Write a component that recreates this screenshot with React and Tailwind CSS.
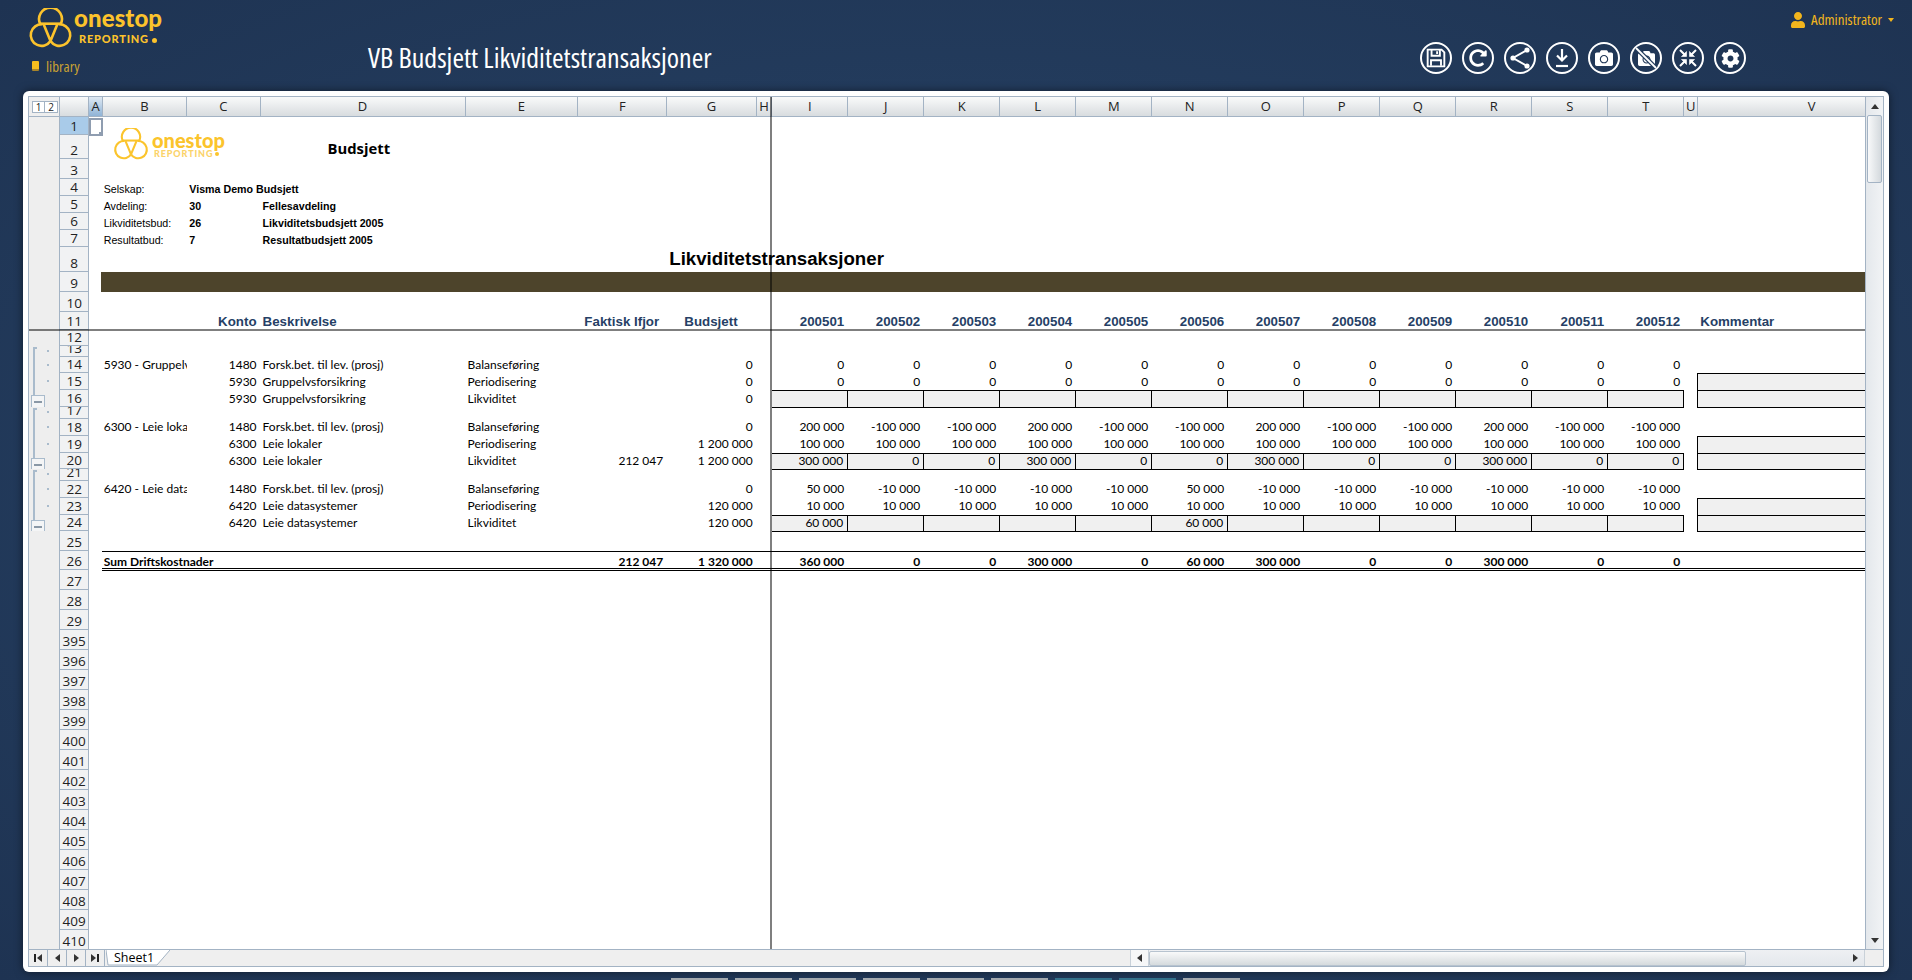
import React from "react";
import { FaCamera, FaCog, FaRedoAlt, FaUser } from "react-icons/fa";

const COLS = [
  ["A", 13.4], ["B", 84.6], ["C", 73.3], ["D", 205], ["E", 112.7], ["F", 89], ["G", 89.4], ["H", 15.6],
  ["I", 76], ["J", 76], ["K", 76], ["L", 76], ["M", 76], ["N", 76], ["O", 76], ["P", 76], ["Q", 76], ["R", 76], ["S", 76], ["T", 76],
  ["U", 14], ["V", 228],
];
const W = Object.fromEntries(COLS);
const MONTHS = ["I", "J", "K", "L", "M", "N", "O", "P", "Q", "R", "S", "T"];
const PERIODS = ["200501", "200502", "200503", "200504", "200505", "200506", "200507", "200508", "200509", "200510", "200511", "200512"];

const info = (label, a, b) => ({
  B: <span className="font-['Liberation_Sans',sans-serif] text-[10.67px] leading-[14px]">{label}</span>,
  C: <span className="font-['Liberation_Sans',sans-serif] text-[10.67px] font-bold leading-[14px]">{a}</span>,
  D: <span className="font-['Liberation_Sans',sans-serif] text-[10.67px] font-bold leading-[14px]">{b}</span>,
});

const ROWS = [
  { n: "1", h: 18, sel: true },
  { n: "2", h: 24, cells: { D: <span className="pl-[65px] font-['Open_Sans',sans-serif] text-[14.8px] font-bold leading-[22px]">Budsjett</span> } },
  { n: "3", h: 20 },
  { n: "4", h: 17, cells: info("Selskap:", "Visma Demo Budsjett", "") },
  { n: "5", h: 17, cells: info("Avdeling:", "30", "Fellesavdeling") },
  { n: "6", h: 17, cells: info("Likviditetsbud:", "26", "Likviditetsbudsjett 2005") },
  { n: "7", h: 17, cells: info("Resultatbud:", "7", "Resultatbudsjett 2005") },
  { n: "8", h: 25, cells: { G: <span className="pl-[2px] font-['Liberation_Sans',sans-serif] text-[18.67px] font-bold leading-[27px]">Likviditetstransaksjoner</span> } },
  { n: "9", h: 20, band: true },
  { n: "10", h: 20 },
  { n: "11", h: 18, head: true },
  { n: "12", h: 16 },
  { n: "13", h: 11, o: "top" },
  { n: "14", h: 16, o: "mid", B: "5930 - Gruppelvsforsikring", C: "1480", D: "Forsk.bet. til lev. (prosj)", E: "Balanseføring", G: "0", m: Array(12).fill("0") },
  { n: "15", h: 17, o: "mid", vbox: true, C: "5930", D: "Gruppelvsforsikring", E: "Periodisering", G: "0", m: Array(12).fill("0") },
  { n: "16", h: 17, o: "end", vbox: true, box: true, C: "5930", D: "Gruppelvsforsikring", E: "Likviditet", G: "0", m: Array(12).fill("") },
  { n: "17", h: 12, o: "top" },
  { n: "18", h: 17, o: "mid", up: true, B: "6300 - Leie lokaler", C: "1480", D: "Forsk.bet. til lev. (prosj)", E: "Balanseføring", G: "0", m: ["200 000", "-100 000", "-100 000", "200 000", "-100 000", "-100 000", "200 000", "-100 000", "-100 000", "200 000", "-100 000", "-100 000"] },
  { n: "19", h: 17, o: "mid", up: true, vbox: true, C: "6300", D: "Leie lokaler", E: "Periodisering", G: "1 200 000", m: Array(12).fill("100 000") },
  { n: "20", h: 16, o: "end", vbox: true, box: true, C: "6300", D: "Leie lokaler", E: "Likviditet", F: "212 047", G: "1 200 000", m: ["300 000", "0", "0", "300 000", "0", "0", "300 000", "0", "0", "300 000", "0", "0"] },
  { n: "21", h: 12, o: "top" },
  { n: "22", h: 17, o: "mid", up: true, B: "6420 - Leie datasystemer", C: "1480", D: "Forsk.bet. til lev. (prosj)", E: "Balanseføring", G: "0", m: ["50 000", "-10 000", "-10 000", "-10 000", "-10 000", "50 000", "-10 000", "-10 000", "-10 000", "-10 000", "-10 000", "-10 000"] },
  { n: "23", h: 17, o: "mid", up: true, vbox: true, C: "6420", D: "Leie datasystemer", E: "Periodisering", G: "120 000", m: Array(12).fill("10 000") },
  { n: "24", h: 16, o: "end", vbox: true, box: true, C: "6420", D: "Leie datasystemer", E: "Likviditet", G: "120 000", m: ["60 000", "", "", "", "", "60 000", "", "", "", "", "", ""] },
  { n: "25", h: 20 },
  { n: "26", h: 19, sum: true, B: "Sum Driftskostnader", F: "212 047", G: "1 320 000", m: ["360 000", "0", "0", "300 000", "0", "60 000", "300 000", "0", "0", "300 000", "0", "0"] },
  { n: "27", h: 20 },
  { n: "28", h: 20 },
  { n: "29", h: 20 },
  ...Array.from({ length: 16 }, (_, i) => ({ n: String(395 + i), h: 20 })),
];

function Tri({ dir, className = "" }) {
  const d = { up: "M0 5 L4 0 L8 5Z", down: "M0 0 L8 0 L4 5Z", left: "M5 0 L5 8 L0 4Z", right: "M0 0 L0 8 L5 4Z" }[dir];
  const v = dir === "up" || dir === "down";
  return (
    <svg width={v ? 8 : 5} height={v ? 5 : 8} viewBox={v ? "0 0 8 5" : "0 0 5 8"} className={className}>
      <path d={d} fill="#333" />
    </svg>
  );
}

function LogoMark({ size, color }) {
  return (
    <svg width={size} height={size * 0.9} viewBox="22 22 138 124" fill="none" stroke={color} strokeWidth="8" className="shrink-0">
      <path d="M60 72 A35 35 0 1 1 122 72" />
      <path d="M56 70 H126" />
      <path d="M66 72 A33 33 0 1 0 91 123" />
      <path d="M116 72 A33 33 0 1 1 91 123" />
      <path d="M70 72 L91 123 M112 72 L91 123" />
    </svg>
  );
}

function RoundIcon({ children }) {
  return <div className="flex h-[32px] w-[32px] items-center justify-center rounded-full border-2 border-white text-white">{children}</div>;
}

function Toolbar() {
  return (
    <div className="flex gap-[10px] pt-[42px]">
      <RoundIcon>
        <svg width="20" height="20" viewBox="0 0 18 18" fill="none" stroke="#fff" strokeWidth="1.7">
          <path d="M1.5 1.5 H14 L16.5 4 V16.5 H1.5Z" />
          <path d="M5 1.5 V7 H12.5 V1.5 M10 3 V5.5" />
          <path d="M4.5 16 V11 H13.5 V16" />
        </svg>
      </RoundIcon>
      <RoundIcon><FaRedoAlt size={18} /></RoundIcon>
      <RoundIcon>
        <svg width="20" height="22" viewBox="0 0 20 22" fill="none" stroke="#fff" strokeWidth="2">
          <path d="M17 3 L3 11 L17 19" />
          <circle cx="17" cy="3" r="1.6" fill="#fff" />
          <circle cx="3" cy="11" r="1.6" fill="#fff" />
          <circle cx="17" cy="19" r="1.6" fill="#fff" />
        </svg>
      </RoundIcon>
      <RoundIcon>
        <svg width="18" height="20" viewBox="0 0 18 20" fill="none" stroke="#fff" strokeWidth="2.2">
          <path d="M9 1 V12 M4 7.5 L9 12.5 L14 7.5" />
          <path d="M3 18 H15" />
        </svg>
      </RoundIcon>
      <RoundIcon><FaCamera size={18} /></RoundIcon>
      <div className="relative">
        <RoundIcon><FaCamera size={17} /></RoundIcon>
        <svg width="32" height="32" viewBox="0 0 32 32" className="absolute left-0 top-0">
          <path d="M6 6 L26 26" stroke="#233c5c" strokeWidth="4.5" />
          <path d="M6 6 L26 26" stroke="#fff" strokeWidth="1.8" />
        </svg>
      </div>
      <RoundIcon>
        <svg width="20" height="20" viewBox="0 0 20 20" fill="none" stroke="#fff" strokeWidth="2">
          <path d="M2 2 L7.5 7.5 M18 2 L12.5 7.5 M2 18 L7.5 12.5 M18 18 L12.5 12.5" />
          <path d="M8.5 3.5 V8.5 H3.5Z M11.5 3.5 V8.5 H16.5Z M8.5 16.5 V11.5 H3.5Z M11.5 16.5 V11.5 H16.5Z" fill="#fff" strokeWidth="0.6" />
        </svg>
      </RoundIcon>
      <RoundIcon><FaCog size={19} /></RoundIcon>
    </div>
  );
}

function Header() {
  const cond = "font-['Open_Sans',sans-serif] font-stretch-condensed";
  return (
    <header className="flex h-[91px] shrink-0">
      <div className="w-[368px] pl-[28px] pt-[7px]">
        <div className="flex">
          <div className="pt-[1px]"><LogoMark size={45} color="#fcc32c" /></div>
          <div className="ml-[1px] flex flex-col text-[#fcc32c]">
            <span className="font-['Lato',sans-serif] text-[24px] font-black leading-[22px] tracking-[0.1px]">onestop</span>
            <span className="mt-[4px] flex items-center pl-[5px] font-['Lato',sans-serif] text-[11px] font-black leading-[12px] tracking-[0.8px]">
              REPORTING
              <i className="ml-[3px] mt-[2px] block h-[5px] w-[5px] rounded-full bg-[#fcc32c]" />
            </span>
          </div>
        </div>
        <div className="mt-[8px] flex items-center gap-[7px] pl-[4px] text-[#c9a233]">
          <span className="block h-[10px] w-[7px] rounded-[1px] border-b-2 border-[#a8842a] bg-[#f5bd1f]" />
          <span className={`${cond} text-[15px] leading-[18px]`}>library</span>
        </div>
      </div>
      <div className={`${cond} w-[1052px] pt-[40px] text-[28px] leading-[34px] text-white`}>VB Budsjett Likviditetstransaksjoner</div>
      <Toolbar />
      <div className={`${cond} ml-auto flex h-[24px] items-center pr-[18px] pt-[15px] text-[15px] text-[#f2b51d]`}>
        <FaUser size={16} className="mr-[5px]" />
        Administrator
        <span className="ml-[6px] h-0 w-0 border-x-[3.5px] border-t-[4px] border-x-transparent border-t-[#f2b51d]" />
      </div>
    </header>
  );
}

function Cell({ col, className = "", children }) {
  return (
    <div className={`flex shrink-0 items-end leading-[17px] ${className}`} style={{ width: W[col] }}>
      {children}
    </div>
  );
}

const DATA = "font-['Lato',sans-serif] text-[12px] text-black";
const HEAD = "font-['Liberation_Sans',sans-serif] text-[13.33px] font-bold text-[#263f66] whitespace-nowrap leading-[13px]";

function Gutter({ o }) {
  return (
    <div className="relative w-[30px] shrink-0 bg-[#eeeeee]">
      {o === "top" && (
        <>
          <i className="absolute bottom-0 left-[4px] top-[1px] w-[2px] bg-[#a9bbcc]" />
          <i className="absolute left-[4px] top-[1px] h-[2px] w-[4px] bg-[#a9bbcc]" />
          <i className="absolute left-[18px] top-[4px] h-[2px] w-[2px] bg-[#a9bbcc]" />
        </>
      )}
      {o === "mid" && (
        <>
          <i className="absolute bottom-0 left-[4px] top-0 w-[2px] bg-[#a9bbcc]" />
          <i className="absolute left-[18px] top-[7px] h-[2px] w-[2px] bg-[#a9bbcc]" />
        </>
      )}
      {o === "end" && (
        <>
          <i className="absolute left-[4px] top-0 h-[5px] w-[2px] bg-[#a9bbcc]" />
          <div className="absolute left-[2px] top-[5px] flex h-[13px] w-[14px] items-center justify-center border border-[#a9bbcc] bg-[#f4f5f6]">
            <i className="block h-[2px] w-[8px] bg-[#8a98a6]" />
          </div>
        </>
      )}
    </div>
  );
}

function RowHead({ n, sel }) {
  return (
    <div className={`flex w-[30.3px] shrink-0 items-end justify-center overflow-hidden border-x border-b border-[#a3b3c4] font-['Open_Sans',sans-serif] text-[13.5px] leading-[15px] text-[#222] ${sel ? "bg-[#a9cbe9]" : "bg-[#f1f2f3]"}`}>
      {n}
    </div>
  );
}

function DataCells({ r }) {
  if (r.head) {
    return (
      <>
        <Cell col="A" />
        <Cell col="B" />
        <Cell col="C" className={`justify-end pr-[4px] ${HEAD}`}>Konto</Cell>
        <Cell col="D" className={`pl-[2px] ${HEAD}`}>Beskrivelse</Cell>
        <Cell col="E" />
        <Cell col="F" className={`justify-center pr-[2px] ${HEAD}`}>Faktisk Ifjor</Cell>
        <Cell col="G" className={`justify-center pr-[2px] ${HEAD}`}>Budsjett</Cell>
        <Cell col="H" />
        {MONTHS.map((c, i) => (
          <Cell key={c} col={c} className={`justify-end pr-[4px] ${HEAD}`}>{PERIODS[i]}</Cell>
        ))}
        <Cell col="U" />
        <Cell col="V" className={`pl-[2px] ${HEAD}`}>Kommentar</Cell>
      </>
    );
  }
  if (r.band) {
    return (
      <>
        <div className="w-[11.7px] shrink-0" />
        <div className="flex-1 bg-[#4d442b]" />
      </>
    );
  }
  if (r.cells) {
    return COLS.map(([c]) => (
      <Cell key={c} col={c} className={`whitespace-nowrap text-black ${c === "B" ? "pl-[1px]" : c === "C" || c === "D" ? "pl-[2px]" : ""}`}>
        {r.cells[c]}
      </Cell>
    ));
  }
  if (!r.m) return null;
  const bold = r.sum ? "font-bold" : "";
  const base = `${DATA} ${r.up ? "pb-[1px]" : ""}`;
  const boxed = "h-[calc(100%+1px)] self-start border-y border-r border-black bg-[#f0f0f0]";
  return (
    <>
      <Cell col="A" />
      <Cell col="B" className={`${base} ${bold} whitespace-nowrap pl-[1px] ${r.sum ? "overflow-visible" : "overflow-hidden"}`}>{r.B}</Cell>
      <Cell col="C" className={`${base} justify-end pr-[4px]`}>{r.C}</Cell>
      <Cell col="D" className={`${base} whitespace-nowrap pl-[2px]`}>{r.D}</Cell>
      <Cell col="E" className={`${base} pl-[2px]`}>{r.E}</Cell>
      <Cell col="F" className={`${base} ${bold} justify-end pr-[4px]`}>{r.F}</Cell>
      <Cell col="G" className={`${base} ${bold} justify-end pr-[4px]`}>{r.G}</Cell>
      <Cell col="H" />
      {MONTHS.map((c, i) => (
        <Cell key={c} col={c} className={`${base} ${bold} justify-end pr-[4px] ${r.box ? boxed : ""}`}>{r.m[i]}</Cell>
      ))}
      <Cell col="U" />
      <Cell col="V" className={r.vbox ? "-ml-[1px] h-[calc(100%+1px)] self-start border-y border-l border-black bg-[#f0f0f0]" : ""} />
    </>
  );
}

function Sheet() {
  return (
    <div className="relative min-w-0 flex-1 overflow-hidden bg-white">
      <div className="flex h-[20px] border-b border-[#a3b3c4]">
        <div className="flex w-[30px] shrink-0 items-start justify-center bg-[#eeeeee] pl-[2px] pt-[4px]">
          <span className="flex h-[12px] w-[13px] items-center justify-center border border-[#a3b3c4] bg-white font-['Open_Sans',sans-serif] text-[10px] leading-none text-[#222]">1</span>
          <span className="flex h-[12px] w-[13px] items-center justify-center border border-l-0 border-[#a3b3c4] bg-white font-['Open_Sans',sans-serif] text-[10px] leading-none text-[#222]">2</span>
        </div>
        <div className="w-[30.3px] shrink-0 border-x border-[#a3b3c4] bg-gradient-to-b from-[#f9fafa] to-[#d8dcdf]" />
        {COLS.map(([c, w]) => (
          <div
            key={c}
            style={{ width: w }}
            className={`flex shrink-0 items-center justify-center border-r border-[#a3b3c4] font-['Open_Sans',sans-serif] text-[13px] leading-none text-[#222] ${c === "A" ? "bg-gradient-to-b from-[#dfe9f3] to-[#8fb3d6]" : "bg-gradient-to-b from-[#f9fafa] to-[#d8dcdf]"}`}
          >
            {c}
          </div>
        ))}
      </div>
      {ROWS.map((r) => (
        <div key={r.n} className="flex" style={{ height: r.h }}>
          <Gutter o={r.o} />
          <RowHead n={r.n} sel={r.sel} />
          <div className="relative flex min-w-0 flex-1">
            <DataCells r={r} />
            {r.sum && (
              <>
                <i className="absolute left-[12.4px] right-0 top-0 h-[1px] bg-black" />
                <i className="absolute bottom-[1px] left-[12.4px] right-0 h-[1px] bg-black" />
                <i className="absolute -bottom-[1px] left-[12.4px] right-0 h-[1px] bg-black" />
              </>
            )}
          </div>
        </div>
      ))}

      <div className="absolute left-[60px] top-[21px] h-[18px] w-[14px] border-2 border-[#8f9db0]" />
      <i className="absolute left-[70px] top-[35px] h-[4px] w-[4px] bg-[#8f9db0]" />
      <div className="absolute left-[84px] top-[31px] flex items-start">
        <LogoMark size={36} color="#fbc42c" />
        <div className="ml-[3px] flex flex-col text-[#fbc42c]">
          <span className="mt-[3px] font-['Lato',sans-serif] text-[20px] font-black leading-[18px]">onestop</span>
          <span className="flex items-center pl-[2px] font-['Lato',sans-serif] text-[9px] font-black leading-[10px] tracking-[0.9px] text-[#fbd36a]">
            REPORTING
            <i className="ml-[2px] block h-[4px] w-[4px] rounded-full bg-[#fbc42c]" />
          </span>
        </div>
      </div>

      <i className="absolute bottom-0 left-[741px] top-0 w-[2px] bg-black/50" />
      <i className="absolute left-0 right-0 top-[232px] h-[2px] bg-black/50" />
    </div>
  );
}

function VScroll() {
  return (
    <div className="flex w-[18px] shrink-0 flex-col items-center border-l border-[#a3b3c4] bg-gradient-to-r from-[#e4e8ec] to-[#f1f3f5]">
      <div className="flex h-[18px] items-center justify-center"><Tri dir="up" /></div>
      <div className="h-[68px] w-[15px] rounded-[2px] border border-[#a3b3c4] bg-gradient-to-r from-[#f8f9fa] to-[#d4d9dd]" />
      <div className="flex-1" />
      <div className="flex h-[18px] items-center justify-center"><Tri dir="down" /></div>
    </div>
  );
}

function BottomBar() {
  const btn = "flex h-full w-[19px] shrink-0 items-center justify-center border-r border-[#a3b3c4]";
  return (
    <div className="flex h-[17px] shrink-0 border-t border-[#a3b3c4] bg-[#efefef]">
      <div className={btn}><i className="mr-px block h-[8px] w-[2px] bg-[#222]" /><Tri dir="left" /></div>
      <div className={btn}><Tri dir="left" /></div>
      <div className={btn}><Tri dir="right" /></div>
      <div className={btn}><Tri dir="right" /><i className="ml-px block h-[8px] w-[2px] bg-[#222]" /></div>
      <div className="relative ml-[1px] h-full w-[64px] shrink-0">
        <svg width="64" height="16" viewBox="0 0 64 16" className="absolute left-0 top-0">
          <path d="M0 0 L2 15 H51 L64 0" fill="#fff" stroke="#a3b3c4" />
        </svg>
        <span className="absolute left-[8px] top-[-1px] font-['Open_Sans',sans-serif] text-[12.5px] leading-[17px] text-black">Sheet1</span>
      </div>
      <div className="flex-1" />
      <div className="flex h-full w-[19px] shrink-0 items-center justify-center border-x border-[#c9d1d9] bg-[#f6f7f8]"><Tri dir="left" /></div>
      <div className="flex w-[715px] shrink-0 items-center bg-gradient-to-b from-[#eef0f3] to-[#e4e8ec]">
        <div className="h-[15px] w-[597px] rounded-[2px] border border-[#b7c3cf] bg-gradient-to-b from-[#f9fafa] to-[#d5dadd]" />
        <div className="flex-1" />
        <div className="flex w-[18px] justify-center"><Tri dir="right" /></div>
      </div>
      <div className="w-[19px] shrink-0 border-l border-[#c9d1d9] bg-[#efefef]" />
    </div>
  );
}

function TaskStrip() {
  const c = ["#a3a9ae", "#a3a9ae", "#a3a9ae", "#a3a9ae", "#a3a9ae", "#a3a9ae", "#33708a", "#33708a", "#a3a9ae"];
  return (
    <div className="flex gap-[7px] pl-[671px] pt-[6px]">
      {c.map((b, i) => (
        <div key={i} className="h-[3px] w-[57px] shrink-0" style={{ background: b }} />
      ))}
    </div>
  );
}

export default function App() {
  return (
    <div className="flex h-[980px] w-[1912px] flex-col overflow-hidden bg-[radial-gradient(ellipse_at_center,#29466a,#1e3352)]">
      <Header />
      <main className="ml-[23px] h-[881px] w-[1866px] shrink-0 rounded-[6px] bg-white p-[5px] shadow-[0_0_8px_rgba(0,0,0,0.5)]">
        <div className="flex h-full flex-col border border-[#a3b3c4]">
          <div className="flex min-h-0 flex-1">
            <Sheet />
            <VScroll />
          </div>
          <BottomBar />
        </div>
      </main>
      <TaskStrip />
    </div>
  );
}
